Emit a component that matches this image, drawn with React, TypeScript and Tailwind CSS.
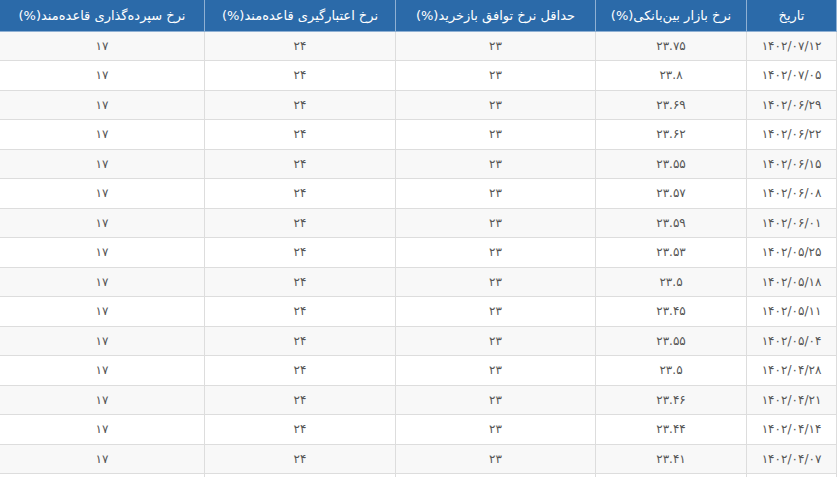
import React from "react";

const rows: [string, string][] = [
  ["۱۴۰۲/۰۷/۱۲", "۲۳.۷۵"],
  ["۱۴۰۲/۰۷/۰۵", "۲۳.۸"],
  ["۱۴۰۲/۰۶/۲۹", "۲۳.۶۹"],
  ["۱۴۰۲/۰۶/۲۲", "۲۳.۶۲"],
  ["۱۴۰۲/۰۶/۱۵", "۲۳.۵۵"],
  ["۱۴۰۲/۰۶/۰۸", "۲۳.۵۷"],
  ["۱۴۰۲/۰۶/۰۱", "۲۳.۵۹"],
  ["۱۴۰۲/۰۵/۲۵", "۲۳.۵۳"],
  ["۱۴۰۲/۰۵/۱۸", "۲۳.۵"],
  ["۱۴۰۲/۰۵/۱۱", "۲۳.۴۵"],
  ["۱۴۰۲/۰۵/۰۴", "۲۳.۵۵"],
  ["۱۴۰۲/۰۴/۲۸", "۲۳.۵"],
  ["۱۴۰۲/۰۴/۲۱", "۲۳.۴۶"],
  ["۱۴۰۲/۰۴/۱۴", "۲۳.۴۴"],
  ["۱۴۰۲/۰۴/۰۷", "۲۳.۴۱"],
];

const headers = [
  "تاریخ",
  "نرخ بازار بین‌بانکی(%)",
  "حداقل نرخ توافق بازخرید(%)",
  "نرخ اعتبارگیری قاعده‌مند(%)",
  "نرخ سپرده‌گذاری قاعده‌مند(%)",
];

const widths = ["w-[90px]", "w-[151px]", "w-[200px]", "w-[191px]", "w-[205px]"];

const td = "border border-[#dddddd] text-center text-[12px] text-[#555]";

export default function App() {
  return (
    <div
      dir="rtl"
      className="w-[839px] h-[477px] overflow-hidden bg-white"
      style={{ fontFamily: '"DejaVu Sans", "Noto Sans", sans-serif' }}
    >
      <table className="w-[837px] table-fixed border-collapse ml-auto mr-[2px]">
        <colgroup>
          {widths.map((w, i) => (
            <col key={i} className={w} />
          ))}
        </colgroup>
        <thead>
          <tr className="h-[31px] bg-[#2b6aa9]">
            {headers.map((h, i) => (
              <th
                key={i}
                className="border border-[#8fb0d3] border-t-0 text-center text-[13px] font-normal text-white px-1"
              >
                {h}
              </th>
            ))}
          </tr>
        </thead>
        <tbody>
          {rows.map((r, i) => (
            <tr
              key={i}
              className={`h-[29.5px] ${i % 2 === 0 ? "bg-[#f8f8f8]" : "bg-white"}`}
            >
              <td className={td}>{r[0]}</td>
              <td className={td}>{r[1]}</td>
              <td className={td}>۲۳</td>
              <td className={td}>۲۴</td>
              <td className={td}>۱۷</td>
            </tr>
          ))}
          <tr className="h-[29.5px] bg-white">
            <td className={td}></td>
            <td className={td}></td>
            <td className={td}></td>
            <td className={td}></td>
            <td className={td}></td>
          </tr>
        </tbody>
      </table>
    </div>
  );
}
